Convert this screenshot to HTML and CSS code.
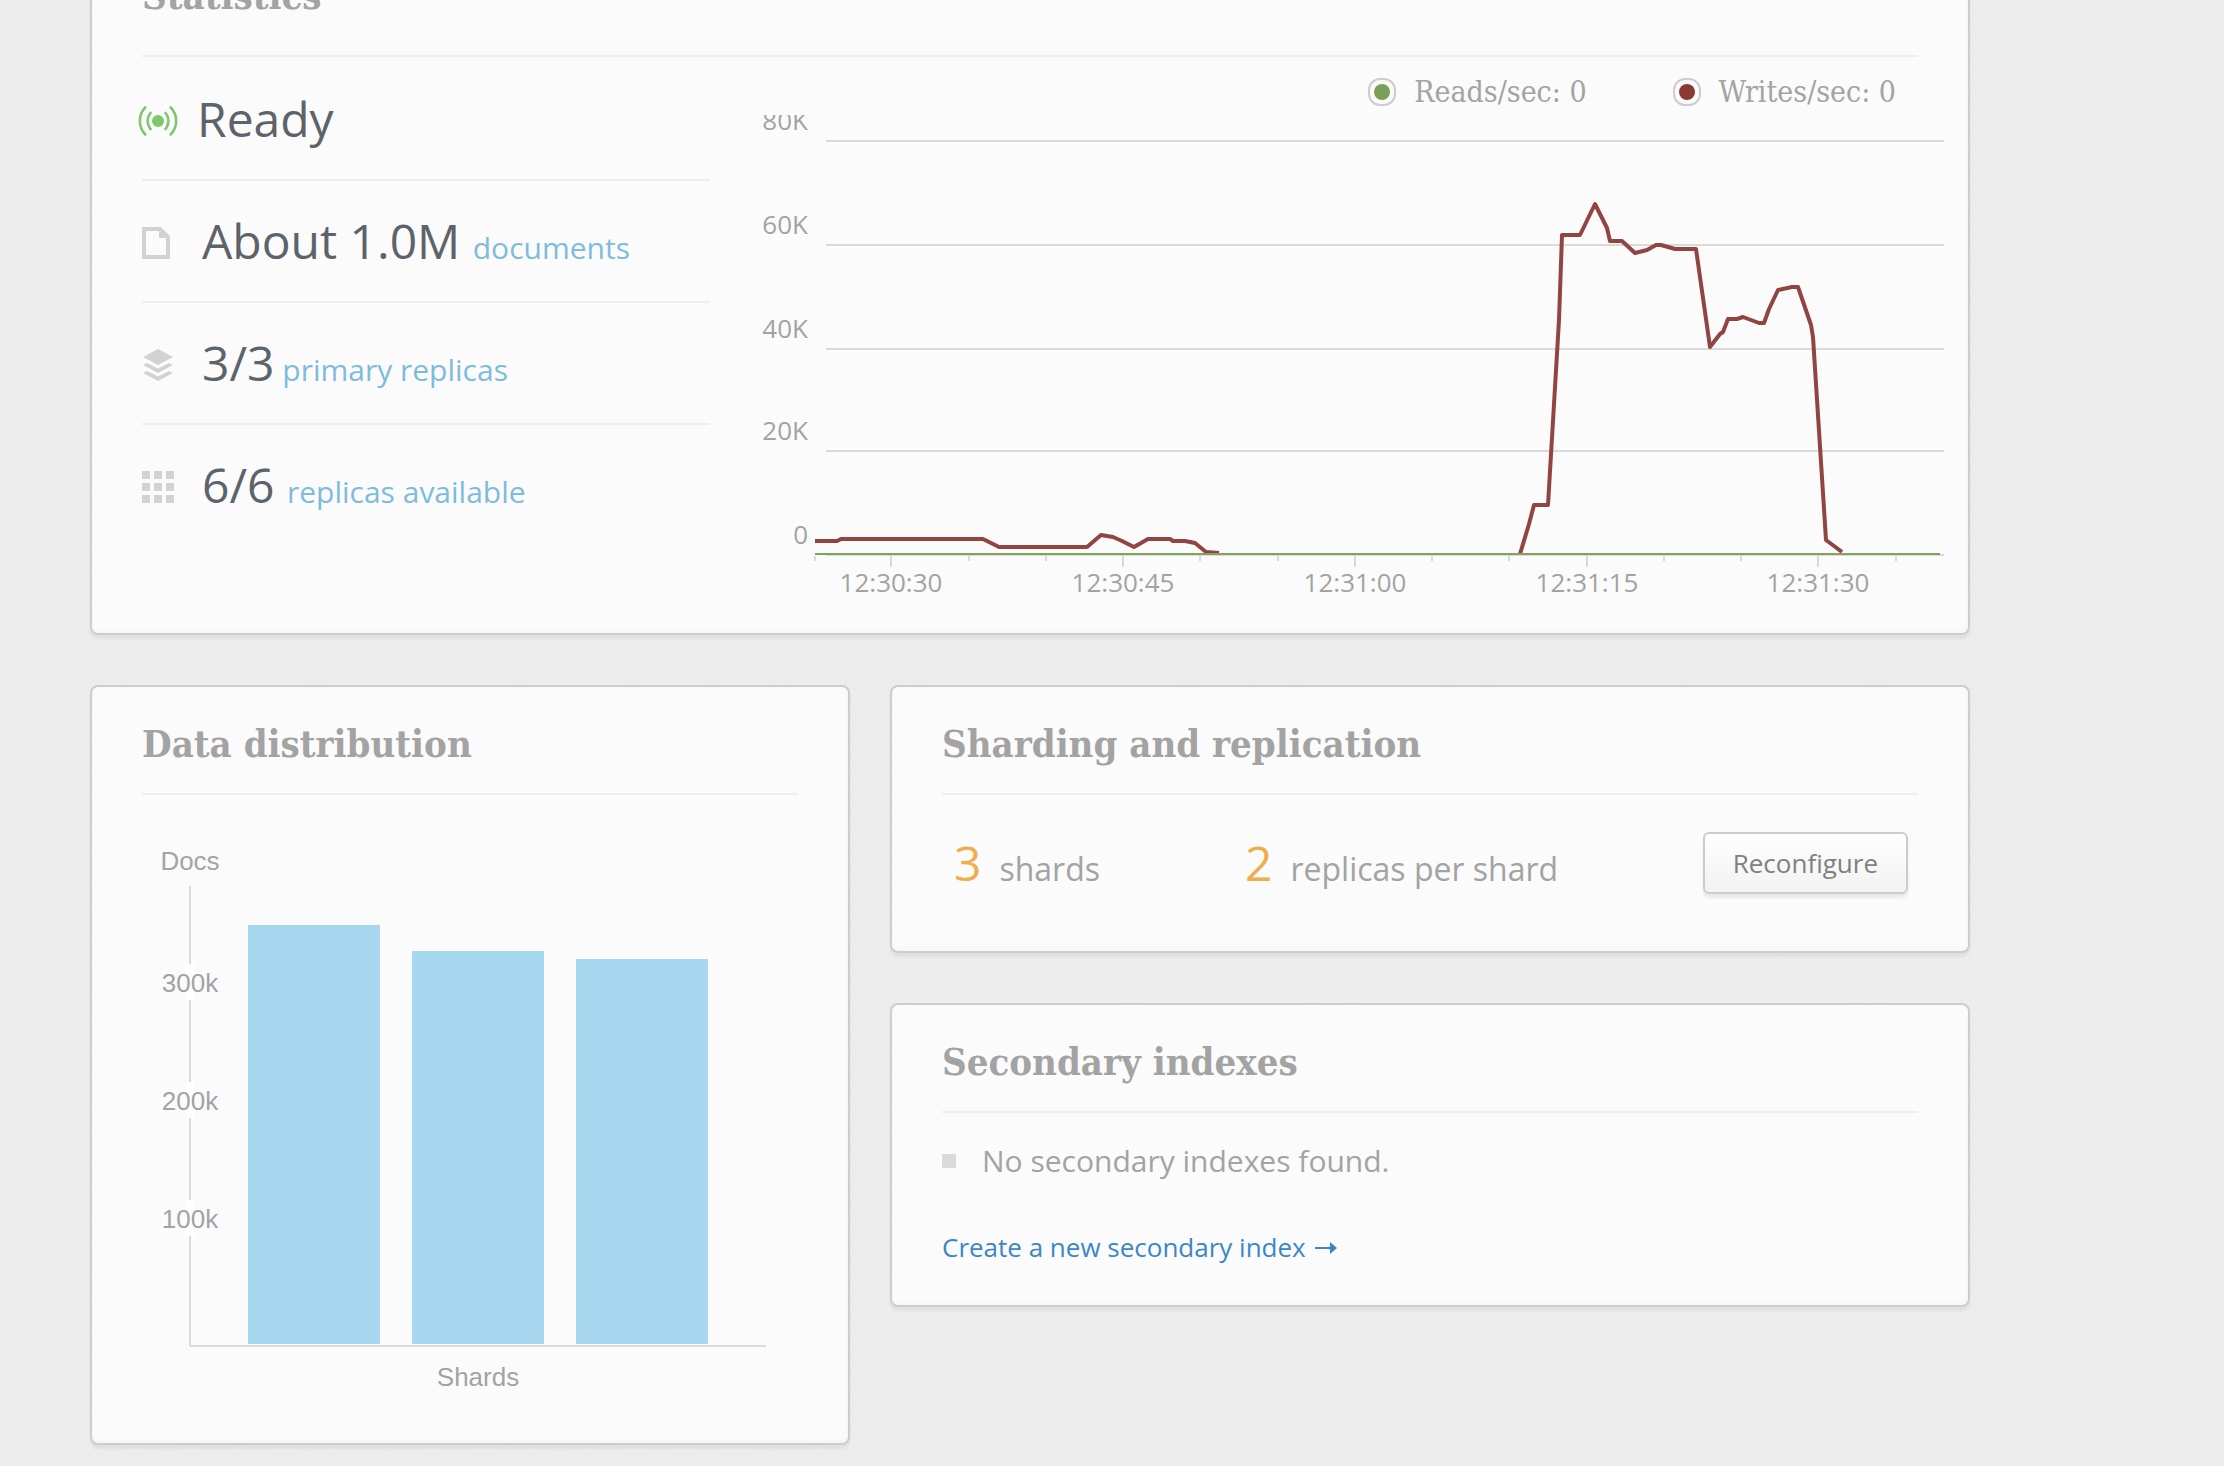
FILE: index.html
```html
<!DOCTYPE html>
<html lang="en">
<head>
<meta charset="utf-8">
<title>Table overview</title>
<link rel="stylesheet" href="styles.css">
</head>
<body>
<main class="page">
  <section class="card">
    <h2 class="card-title card-title-roomy">Statistics</h2>
    <div class="stats">
      <ul class="stat-list">
        <li class="stat stat-status">
          <svg class="icon-status" width="40" height="32" viewBox="0 0 40 32" aria-hidden="true">
            <circle cx="20" cy="16" r="6" fill="#7fc66f"/>
            <g fill="none" stroke="#7fc66f" stroke-width="2.600">
              <path d="M13.300 7.200A12.500 12.500 0 0 0 13.300 24.800M26.700 7.200A12.500 12.500 0 0 1 26.700 24.800"/>
              <path d="M8 1.800A19.500 19.500 0 0 0 8 30.200M32 1.800A19.500 19.500 0 0 1 32 30.200"/>
            </g>
          </svg>
          <p class="stat-text">Ready</p>
        </li>
        <li class="stat">
          <svg width="32" height="32" viewBox="0 0 32 32" aria-hidden="true">
            <path d="M2 2H18L26 10V30H2Z" fill="none" stroke="#d2d2d2" stroke-width="4"/>
            <path d="M17 1V11H27Z" fill="#d2d2d2"/>
          </svg>
          <p class="stat-text">About 1.0M <a class="stat-link" href="#documents">documents</a></p>
        </li>
        <li class="stat">
          <svg width="32" height="32" viewBox="0 0 32 32" aria-hidden="true">
            <path d="M16 0L31 8L16 16L1 8Z" fill="#d2d2d2"/>
            <path d="M1 16L5 14L16 19.500L27 14L31 16L16 24ZM1 24L5 22L16 27.500L27 22L31 24L16 32Z" fill="#d2d2d2"/>
          </svg>
          <p class="stat-text">3/3<a class="stat-link" href="#primaries"> primary replicas</a></p>
        </li>
        <li class="stat">
          <svg width="32" height="32" viewBox="0 0 32 32" aria-hidden="true">
            <path d="M0 0h8v8h-8zM12 0h8v8h-8zM24 0h8v8h-8zM0 12h8v8h-8zM12 12h8v8h-8zM24 12h8v8h-8zM0 24h8v8h-8zM12 24h8v8h-8zM24 24h8v8h-8z" fill="#d2d2d2"/>
          </svg>
          <p class="stat-text">6/6 <a class="stat-link" href="#replicas">replicas available</a></p>
        </li>
      </ul>
      <div class="activity">
        <ul class="legend">
          <li class="legend-item"><span class="swatch swatch-reads"></span>Reads/sec: 0</li>
          <li class="legend-item"><span class="swatch swatch-writes"></span>Writes/sec: 0</li>
        </ul>
        <svg class="chart" viewBox="762 115 1182 485" role="img" aria-label="Reads and writes per second">
          <path class="grid" d="M826 141H1944M826 245H1944M826 349H1944M826 451H1944M826 555H1944"/>
          <path class="grid" d="M815 556V561M969 556V561M1046 556V561M1200 556V561M1278 556V561M1432 556V561M1509 556V561M1664 556V561M1741 556V561M1896 556V561M891 556V567M1123 556V567M1355 556V567M1587 556V567M1818 556V567"/>
          <g class="axis-text axis-y">
            <text x="808" y="130">80K</text>
            <text x="808" y="234">60K</text>
            <text x="808" y="338">40K</text>
            <text x="808" y="440">20K</text>
            <text x="808" y="544">0</text>
          </g>
          <g class="axis-text axis-x">
            <text x="891" y="592">12:30:30</text>
            <text x="1123" y="592">12:30:45</text>
            <text x="1355" y="592">12:31:00</text>
            <text x="1587" y="592">12:31:15</text>
            <text x="1818" y="592">12:31:30</text>
          </g>
          <path class="line-writes" d="M815 541H837L841 539H983L999 547H1087L1101 535L1113 537L1122 541L1134 547L1148 539H1170L1173 541H1185L1195 543L1206 552L1219 553M1520 554L1529 524L1534 505H1548L1559 320L1562 235H1580L1595 204L1607 228L1610 241H1622L1635 253L1647 250L1656 245H1661L1675 249H1696L1710 347L1720 334L1723 332L1728 319H1737L1743 317L1759 323H1764L1769 309L1778 290L1792 287H1798L1811 325L1813 337L1826 540L1842 552"/>
          <path class="line-reads" d="M815 554H1940"/>
        </svg>
      </div>
    </div>
  </section>

  <div class="columns">
    <section class="card card-distribution">
      <h2 class="card-title">Data distribution</h2>
      <svg class="chart" viewBox="142 795 656 600" role="img" aria-label="Documents per shard">
        <path class="grid" d="M190 886V1346M190 1346H766"/>
        <path d="M186 964h8v36h-8zM186 1082h8v36h-8zM186 1200h8v36h-8z" fill="#fff"/>
        <g class="bar">
          <rect x="248" y="925" width="132" height="419"/>
          <rect x="412" y="951" width="132" height="393"/>
          <rect x="576" y="959" width="132" height="385"/>
        </g>
        <g class="bar-text">
          <text x="190" y="870">Docs</text>
          <text x="190" y="992">300k</text>
          <text x="190" y="1110">200k</text>
          <text x="190" y="1228">100k</text>
          <text x="478" y="1386">Shards</text>
        </g>
      </svg>
    </section>

    <div class="stack">
      <section class="card">
        <h2 class="card-title">Sharding and replication</h2>
        <div class="sharding">
          <p class="figure"><span class="figure-value">3</span>shards</p>
          <p class="figure"><span class="figure-value">2</span>replicas per shard</p>
          <button class="button" type="button">Reconfigure</button>
        </div>
      </section>
      <section class="card">
        <h2 class="card-title">Secondary indexes</h2>
        <ul class="indexes">
          <li class="indexes-item">No secondary indexes found.</li>
        </ul>
        <a class="create-link" href="#new-index">Create a new secondary index <svg width="24" height="18" viewBox="0 0 24 18" aria-hidden="true"><path d="M2 8H17V3L24 9L17 15V10H2Z" fill="#3a87c8"/></svg></a>
      </section>
    </div>
  </div>
</main>
</body>
</html>
```
FILE: styles.css
```css
* {
  box-sizing: border-box;
}

body {
  margin: 0;
  background: #ededed repeating-linear-gradient(120deg, rgba(0, 0, 0, 0.006) 0 2px, transparent 2px 7px);
  color: #a3a3a3;
  font-family: "Open Sans", "Noto Sans", sans-serif;
}

h2,
p,
ul {
  margin: 0;
  padding: 0;
}

ul {
  list-style: none;
}

a {
  text-decoration: none;
}

/* The page is scrolled part of the way into the first card. */
.page {
  display: grid;
  gap: 50px;
  margin: -63px 254px 0 90px;
  padding-bottom: 21px;
}

.card {
  padding: 0 50px;
  border: 2px solid #cdcdcd;
  border-radius: 8px;
  background: #fbfbfb;
  box-shadow: 0 4px 3px rgba(0, 0, 0, 0.05), inset 0 -2px 4px rgba(0, 0, 0, 0.03);
}

.card-title {
  padding: 37px 0 29px;
  border-bottom: 2px solid #eeeeee;
  font: bold 38px/40px "DejaVu Serif Condensed", "DejaVu Serif", serif;
}

.card-title-roomy {
  padding-bottom: 39px;
}

.stats {
  display: grid;
  grid-template-columns: 568px minmax(0, 1fr);
  gap: 52px;
  align-items: start;
  margin-right: -26px;
  padding-bottom: 33px;
}

.stat {
  display: flex;
  align-items: baseline;
  gap: 28px;
  padding: 27px 0;
  border-bottom: 2px solid #eeeeee;
}

.stat:last-child {
  border-bottom: 0;
}

.stat-status {
  gap: 19px;
  padding-top: 29px;
}

.icon-status {
  margin-left: -4px;
}

.stat-text {
  color: #5d636a;
  font-size: 48px;
  line-height: 66px;
}

.stat-link {
  color: #7fbbdc;
  font-size: 30px;
  line-height: 40px;
}

.legend {
  display: flex;
  justify-content: flex-end;
  gap: 86px;
  padding: 17px 48px 5px 0;
}

.legend-item {
  display: flex;
  align-items: center;
  gap: 18px;
  font: 30px/36px "DejaVu Serif Condensed", "DejaVu Serif", serif;
}

.swatch {
  width: 28px;
  height: 28px;
  padding: 4px;
  border: 2px solid #cccccc;
  border-radius: 12px;
}

.swatch::before {
  display: block;
  width: 16px;
  height: 16px;
  border-radius: 50%;
  background: currentColor;
  content: "";
}

.swatch-reads {
  color: #7a9f58;
}

.swatch-writes {
  color: #8c3835;
}

.chart {
  display: block;
  width: 100%;
}

.grid {
  fill: none;
  stroke: #dadada;
  stroke-width: 2px;
}

.axis-text {
  fill: #a3a3a3;
  font-size: 26px;
}

.axis-y {
  text-anchor: end;
}

.axis-x {
  text-anchor: middle;
}

.line-writes,
.line-reads {
  fill: none;
  stroke: #924443;
  stroke-width: 4px;
  stroke-linejoin: round;
}

.line-reads {
  stroke: #7fa55d;
  stroke-width: 2px;
}

.bar {
  fill: #a7d7ee;
}

.bar-text {
  fill: #a3a3a3;
  font: 26px "Liberation Sans", Arial, sans-serif;
  text-anchor: middle;
}

.columns {
  display: grid;
  grid-template-columns: 760fr 1080fr;
  gap: 40px;
  align-items: start;
}

.card-distribution {
  padding-bottom: 48px;
}

.stack {
  display: grid;
  gap: 50px;
}

.sharding {
  display: flex;
  align-items: center;
  padding: 35px 10px 55px 12px;
}

.figure {
  display: flex;
  align-items: baseline;
  gap: 18px;
  font-size: 32px;
  line-height: 40px;
}

.figure + .figure {
  margin-left: 145px;
}

.figure-value {
  color: #f0ad4e;
  font-size: 48px;
  line-height: 66px;
}

.button {
  height: 62px;
  margin-left: auto;
  padding: 0 28px;
  border: 2px solid #cccccc;
  border-radius: 6px;
  background: linear-gradient(#ffffff, #f2f2f2);
  box-shadow: 0 4px 3px rgba(0, 0, 0, 0.07);
  color: #808080;
  font: 26px "Open Sans", "Noto Sans", sans-serif;
}

.indexes {
  padding: 28px 0 48px;
}

.indexes-item {
  display: flex;
  align-items: center;
  gap: 26px;
  font-size: 30px;
  line-height: 40px;
}

.indexes-item::before {
  width: 14px;
  height: 14px;
  background: #dadada;
  content: "";
}

.create-link {
  display: block;
  padding-bottom: 40px;
  color: #3a87c8;
  font-size: 26px;
  line-height: 36px;
}
```
